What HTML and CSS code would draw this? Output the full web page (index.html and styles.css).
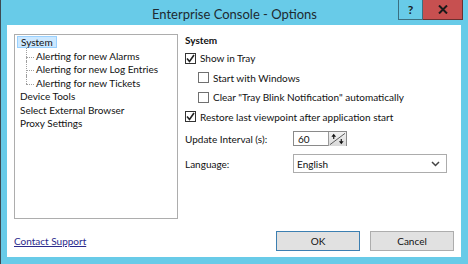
FILE: index.html
```html
<!DOCTYPE html>
<html lang="en">
<head>
  <meta charset="UTF-8">
  <title>Enterprise Console - Options</title>
  <link rel="stylesheet" href="styles.css">
</head>
<body>
  <div class="window">
    <div class="titlebar">
      <span class="title">Enterprise Console - Options</span>
      <div class="controls">
        <span class="ctl help">?</span>
        <span class="ctl close">
          <svg width="10" height="9" viewBox="0 0 10 9"><path d="M1 0.5 L9 8.5 M9 0.5 L1 8.5" stroke="#1a1a1a" stroke-width="2"/></svg>
        </span>
      </div>
    </div>

    <div class="client">
      <div class="main">
        <ul class="tree">
          <li class="node selected"><span>System</span></li>
          <li class="node child">Alerting for new Alarms</li>
          <li class="node child">Alerting for new Log Entries</li>
          <li class="node child last">Alerting for new Tickets</li>
          <li class="node">Device Tools</li>
          <li class="node">Select External Browser</li>
          <li class="node">Proxy Settings</li>
        </ul>

        <div class="pane">
          <h2>System</h2>
          <label class="check on"><span class="box"><svg width="9" height="9" viewBox="0 0 9 9"><path d="M1 4.5 L3.5 7.5 L8 1" fill="none" stroke="#222" stroke-width="1.6"/></svg></span>Show in Tray</label>
          <label class="check sub"><span class="box"></span>Start with Windows</label>
          <label class="check sub"><span class="box"></span>Clear "Tray Blink Notification" automatically</label>
          <label class="check on"><span class="box"><svg width="9" height="9" viewBox="0 0 9 9"><path d="M1 4.5 L3.5 7.5 L8 1" fill="none" stroke="#222" stroke-width="1.6"/></svg></span>Restore last viewpoint after application start</label>

          <div class="field interval">
            <span class="label">Update Interval (s):</span>
            <div class="spin">
              <span class="value">60</span>
              <span class="spin-btn">
                <svg width="18" height="14" viewBox="0 0 18 14">
                  <path d="M17 1 L1 13" stroke="#555" stroke-width="1"/>
                  <path d="M5 1.5 L2.5 4.5 L7.5 4.5 Z" fill="#111"/>
                  <path d="M4.4 4 L4.4 7 L5.6 7 L5.6 4 Z" fill="#111"/>
                  <path d="M13 12.5 L10.5 9.5 L15.5 9.5 Z" fill="#111"/>
                  <path d="M12.4 7 L12.4 10 L13.6 10 L13.6 7 Z" fill="#111"/>
                </svg>
              </span>
            </div>
          </div>

          <div class="field">
            <span class="label">Language:</span>
            <div class="select">
              <span>English</span>
              <svg width="9" height="6" viewBox="0 0 9 6"><path d="M1 1 L4.5 4.5 L8 1" fill="none" stroke="#444" stroke-width="1.5"/></svg>
            </div>
          </div>
        </div>
      </div>

      <div class="footer">
        <a class="link" href="#">Contact Support</a>
        <div class="buttons">
          <button class="btn default">OK</button>
          <button class="btn">Cancel</button>
        </div>
      </div>
    </div>
  </div>
</body>
</html>
```

FILE: styles.css
```css
* {
  box-sizing: border-box;
}

body {
  margin: 0;
  font-family: 'Segoe UI', Lato, sans-serif;
  font-size: 10px;
  color: #111;
}

.window {
  width: 468px;
  height: 264px;
  background-color: #68cbe8;
  border-left: 1px solid #3d4a52;
  display: flex;
  flex-direction: column;
}

.titlebar {
  height: 25px;
  display: grid;
  grid-template-columns: 1fr auto 1fr;
}

.title {
  grid-column: 2;
  font-size: 13px;
  line-height: 28px;
  color: #1e2a30;
}

.controls {
  grid-column: 3;
  justify-self: end;
  display: flex;
  height: 20px;
  margin-right: 5px;
}

.ctl {
  display: flex;
  align-items: center;
  justify-content: center;
  height: 20px;
  border: 1px solid #3b6f80;
  border-top: none;
}

.help {
  width: 25px;
  font-weight: bold;
  font-size: 12px;
  color: #1a1a1a;
}

.close {
  width: 40px;
  background-color: #c75050;
  border-left: none;
  border-color: #6a3030;
}

.client {
  flex: 1;
  margin: 0 7px 7px 6px;
  background-color: #fff;
  padding: 9px 7px 6px 7px;
  display: flex;
  flex-direction: column;
}

.main {
  display: flex;
  gap: 7px;
}

.tree {
  list-style: none;
  margin: 0;
  padding: 1px 0 0 1px;
  width: 164px;
  height: 185px;
  border: 1px solid #adadad;
}

.node {
  height: 13.5px;
  line-height: 13.5px;
  padding-left: 4px;
  white-space: nowrap;
  position: relative;
}

.selected span {
  display: inline-block;
  margin-left: -3px;
  padding: 0 3px;
  height: 12px;
  line-height: 11px;
  background-color: #cce8ff;
  border: 1px solid #99d1ff;
}

.child {
  padding-left: 20px;
}

/* dotted connectors of the tree */
.child::before {
  content: '';
  position: absolute;
  left: 10px;
  top: 7px;
  width: 8px;
  border-top: 1px dotted #a0a0a0;
}

.child::after {
  content: '';
  position: absolute;
  left: 10px;
  top: -2px;
  height: 15.5px;
  border-left: 1px dotted #a0a0a0;
}

.child.last::after {
  height: 9px;
}

.pane {
  flex: 1;
  display: flex;
  flex-direction: column;
}

h2 {
  margin: 0 0 5px 0;
  font-size: 10px;
  font-weight: bold;
  line-height: 12px;
}

.check {
  display: flex;
  align-items: center;
  gap: 4px;
  height: 14px;
  margin-bottom: 5.5px;
  white-space: nowrap;
}

.check.sub {
  margin-left: 13px;
}

.box {
  width: 11px;
  height: 11px;
  border: 1px solid #333;
  background-color: #fff;
  display: flex;
  align-items: center;
  justify-content: center;
}

.sub .box {
  border-color: #707070;
}

.field {
  display: flex;
  align-items: center;
  margin-top: 8px;
}

.field.interval {
  margin-top: 2px;
}

.label {
  width: 108px;
}

.spin {
  width: 54px;
  height: 15px;
  border: 1px solid #8a8a8a;
  display: flex;
  align-items: center;
}

.value {
  flex: 1;
  padding-left: 4px;
}

.spin-btn {
  width: 18px;
  height: 14px;
  background: linear-gradient(#f2f2f2, #d8d8d8);
  border-left: 1px solid #9a9a9a;
  display: flex;
}

.select {
  width: 154px;
  height: 19px;
  border: 1px solid #acacac;
  display: flex;
  align-items: center;
  justify-content: space-between;
  padding: 0 6px 0 3px;
}

.footer {
  margin-top: auto;
  display: flex;
  align-items: center;
  justify-content: space-between;
}

.link {
  color: #2b2a8c;
  text-decoration: underline;
}

.buttons {
  display: flex;
  gap: 10px;
}

.btn {
  width: 84px;
  height: 20px;
  font-family: inherit;
  font-size: 10px;
  color: #111;
  background-color: #e1e1e1;
  border: 1px solid #adadad;
  padding: 0;
}

.btn.default {
  border-color: #3c7fb1;
}
```
